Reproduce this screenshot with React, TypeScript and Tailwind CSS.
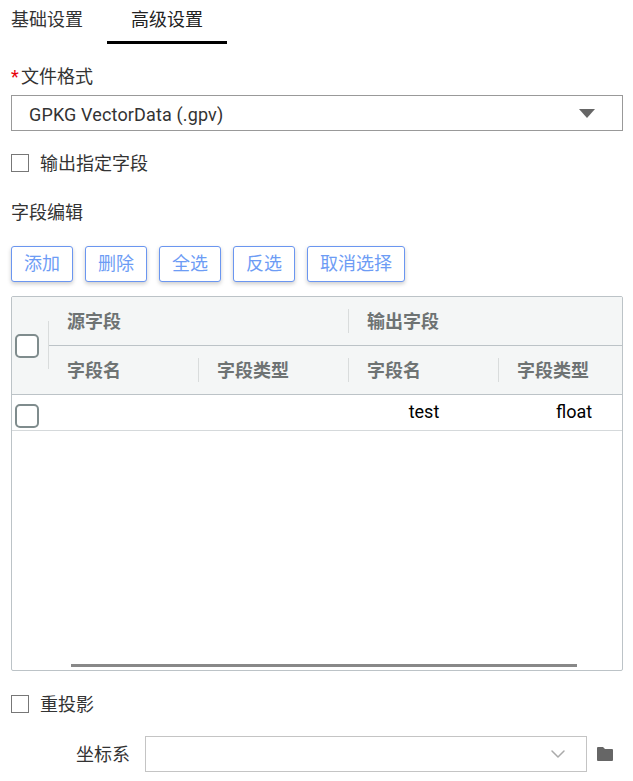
import { ChevronDown } from 'lucide-react';

const font = "font-['Roboto','Noto_Sans_CJK_SC',sans-serif]";

const Check = ({ big }: { big?: boolean }) =>
  big ? (
    <div className="w-6 h-6 rounded-[5px] border-2 border-[#7f8c8d] bg-white shrink-0" />
  ) : (
    <div className="w-[18px] h-[18px] border border-[#777] bg-white shrink-0" />
  );

const ActionButton = ({ label }: { label: string }) => (
  <button className="h-9 px-3 rounded-[3px] border border-[#6b96f0] bg-white text-[18px] leading-none text-[#6d9cf5] shadow-[0_2px_4px_rgba(0,0,0,0.2)]">
    {label}
  </button>
);

const HeadCell = ({ label, divider }: { label: string; divider?: boolean }) => (
  <div className="h-full flex items-center">
    <div className={divider ? 'w-px h-6 bg-[#d9dcdc]' : 'w-px h-6'} />
    <div className="pl-[18px] text-[18px] font-bold text-[#6e7373] whitespace-nowrap">{label}</div>
  </div>
);

export default function App() {
  return (
    <div className={`${font} w-[633px] h-[781px] overflow-hidden bg-white text-[#333] text-[18px]`}>
      {/* Tabs */}
      <div className="h-11 flex pl-[11px]">
        <div className="w-24 pt-[6px] leading-[27px]">基础设置</div>
        <div className="w-[120px] h-11 border-b-[3px] border-black text-center pt-[6px] leading-[27px] text-[#222]">
          高级设置
        </div>
      </div>

      <div className="pl-[11px]">
        <div className="mt-[21px] h-[24px] leading-[24px] flex">
          <span className="text-red-600 w-[10px]">*</span>
          <span>文件格式</span>
        </div>

        <div className="mt-[6px] h-9 w-[612px] border border-[#999] flex items-center justify-between pl-[17px] pr-[27px]">
          <span className="pt-[2px] tracking-[0.14px] text-[#333]">GPKG VectorData (.gpv)</span>
          <div className="w-0 h-0 border-x-[8px] border-x-transparent border-t-[9px] border-t-[#666]" />
        </div>

        <label className="mt-[23px] h-[18px] flex items-center gap-[11px]">
          <Check />
          <span>输出指定字段</span>
        </label>

        <div className="mt-[29px] h-6 leading-6">字段编辑</div>

        <div className="mt-[21px] flex gap-3">
          <ActionButton label="添加" />
          <ActionButton label="删除" />
          <ActionButton label="全选" />
          <ActionButton label="反选" />
          <ActionButton label="取消选择" />
        </div>

        {/* Table */}
        <div className="relative mt-[14px] w-[612px] h-[375px] border border-[#bcc3c7] rounded-[2px] overflow-hidden">
          <div className="grid grid-cols-[36px_150px_150px_150px_150px] w-[636px] grid-rows-[49px_48px] bg-[#f4f6f6] border-b border-[#bcc3c7]">
            <div className="row-span-2 relative flex items-center pl-[3px]">
              <Check big />
              <div className="absolute -right-px top-[24px] h-12 w-px bg-[#d9dcdc]" />
            </div>
            <div className="col-span-2 border-b border-[#bcc3c7]">
              <HeadCell label="源字段" />
            </div>
            <div className="col-span-2 border-b border-[#bcc3c7]">
              <HeadCell label="输出字段" divider />
            </div>
            <HeadCell label="字段名" />
            <HeadCell label="字段类型" divider />
            <HeadCell label="字段名" divider />
            <HeadCell label="字段类型" divider />
          </div>

          <div className="grid grid-cols-[37px_150px_150px_150px_150px] w-[637px] h-9 items-center border-b border-[#d5d9db] text-black">
            <div className="pl-[3px] pt-[7px] flex items-center">
              <Check big />
            </div>
            <div />
            <div />
            <div className="text-center pb-[2px]">test</div>
            <div className="text-center pb-[2px]">float</div>
          </div>

          <div className="absolute left-[59px] bottom-[3px] w-[506px] h-[3px] bg-[#888]" />
        </div>

        <label className="mt-[24px] h-[18px] flex items-center gap-[11px]">
          <Check />
          <span>重投影</span>
        </label>

        <div className="mt-[23px] flex items-center">
          <span className="w-[119px] mr-px text-right">坐标系</span>
          <div className="ml-[14px] w-[442px] h-9 border border-[#c4c4c4] flex items-center justify-end pr-[16px]">
            <ChevronDown className="w-6 h-6 text-[#aaa]" strokeWidth={1.5} />
          </div>
          <svg className="ml-[10px] w-4 h-4" viewBox="0 0 16 16">
            <path d="M0 2a1 1 0 0 1 1-1h5l2 2h7a1 1 0 0 1 1 1v10a1 1 0 0 1-1 1H1a1 1 0 0 1-1-1z" fill="#666" />
          </svg>
        </div>
      </div>
    </div>
  );
}
